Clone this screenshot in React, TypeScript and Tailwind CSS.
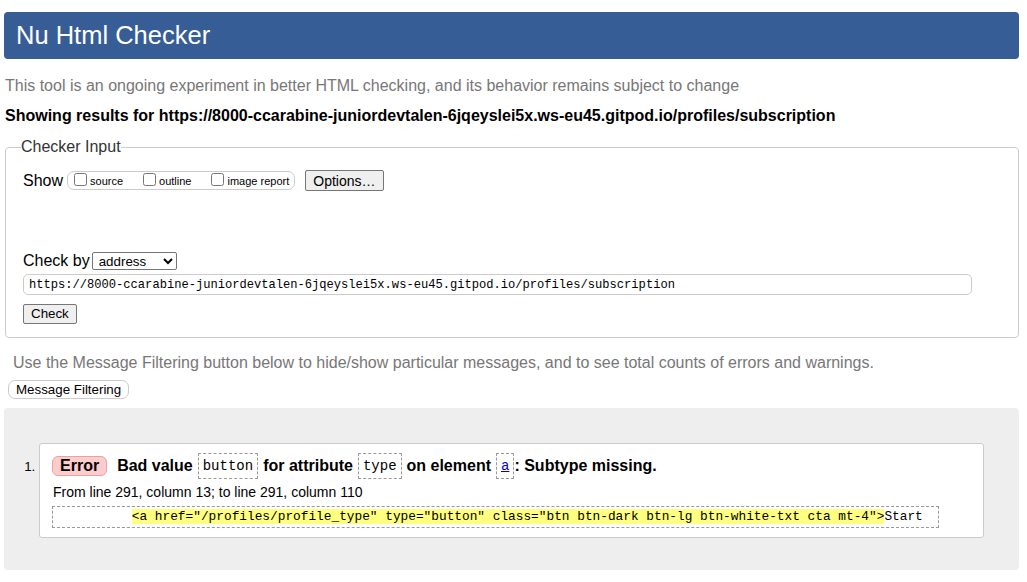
import React from 'react';

const url = 'https://8000-ccarabine-juniordevtalen-6jqeyslei5x.ws-eu45.gitpod.io/profiles/subscription';

const Code = ({ children, link }: { children: React.ReactNode; link?: boolean }) => (
  <code
    className={`mx-[5px] inline-block border border-dashed border-[#999] px-[4px] leading-[24px] font-['Liberation_Mono',monospace] text-[14px] font-normal ${
      link ? 'text-[#00e] underline' : 'text-black'
    }`}
  >
    {children}
  </code>
);

const NativeButton = ({ children, className = '' }: { children: React.ReactNode; className?: string }) => (
  <button
    className={`rounded-[2px] border border-[#767676] bg-[#efefef] px-[7px] text-[13.33px] leading-[18px] text-black ${className}`}
  >
    {children}
  </button>
);

export default function App() {
  return (
    <div className="min-h-[582px] bg-white pl-1 pr-2 pt-3 font-['Liberation_Sans',Arial,sans-serif] text-black">
      {/* header */}
      <h1 className="flex h-[47px] items-center rounded-[4px] bg-[#365d95] pl-3 text-[25.5px] font-normal text-white">
        Nu Html Checker
      </h1>

      <p className="mt-[18px] pl-px text-[16px] leading-[18px] text-[#777]">
        This tool is an ongoing experiment in better HTML checking, and its behavior remains subject to change
      </p>
      <p className="mt-[12px] pl-px text-[16px] font-bold leading-[18px]">Showing results for {url}</p>

      {/* checker input */}
      <fieldset className="mt-[13px] ml-px rounded-[4px] border border-[#ccc] pb-[13px] pl-[17px] pr-[46px]">
        <legend className="-ml-[2px] text-[16px] leading-[18px] text-[#333]">Checker Input</legend>

        <div className="mt-[14px] flex items-center">
          <span className="text-[16px] leading-[18px]">Show</span>
          <div className="ml-[4px] flex h-[19px] items-center rounded-[7px] border border-[#ccc] pl-[6px] pr-[5px] text-[11px]">
            <label className="flex items-end">
              <input type="checkbox" className="mb-[2px] h-[13px] w-[13px]" />
              <span className="ml-[3px] leading-[14px]">source</span>
            </label>
            <label className="ml-[20px] flex items-end">
              <input type="checkbox" className="mb-[2px] h-[13px] w-[13px]" />
              <span className="ml-[3px] leading-[14px]">outline</span>
            </label>
            <label className="ml-[20px] flex items-end">
              <input type="checkbox" className="mb-[2px] h-[13px] w-[13px]" />
              <span className="ml-[3px] leading-[14px]">image report</span>
            </label>
          </div>
          <NativeButton className="ml-[10px] h-[21px] text-[14px]">Options…</NativeButton>
        </div>

        <div className="mt-[61px] flex items-center">
          <span className="text-[16px] leading-[18px]">Check by</span>
          <select className="ml-[2px] h-[18px] w-[85px] rounded-[2px] border border-[#767676] pl-[2px] text-[13.33px] leading-[16px]">
            <option>address</option>
          </select>
        </div>

        <input
          readOnly
          value={url}
          className="mt-[4px] block h-[21px] w-full rounded-[5px] border border-[#ccc] px-[5px] font-['Liberation_Mono',monospace] text-[12.1px] text-black"
        />

        <NativeButton className="mt-[9px] block h-[20px]">Check</NativeButton>
      </fieldset>

      <p className="mt-[16px] pl-[9px] text-[16px] leading-[18px] text-[#777]">
        Use the Message Filtering button below to hide/show particular messages, and to see total counts of errors and warnings.
      </p>
      <button className="mt-[8px] ml-[4px] h-[19px] rounded-[7px] border border-[#ccc] bg-white px-[7px] text-[13.33px] leading-[16px]">
        Message Filtering
      </button>

      {/* results */}
      <div className="mt-[7px] h-[162px] rounded-[4px] bg-[#eee] pl-[35px] pr-[35px] pt-[35px]">
        <ol className="list-decimal text-[13.33px]">
          <li className="rounded-[3px] border border-[#ccc] bg-white pb-[9px] pl-[12px] pt-[9px] pr-[44px] marker:text-black">
            <p className="flex items-center text-[16px] font-bold leading-[24px]">
              <strong className="rounded-[6px] border border-[#e6a3a3] bg-[#fcc] px-[7px] leading-[18px]">Error</strong>
              <span className="ml-[10px]">Bad value</span>
              <Code>button</Code>
              <span>for attribute</span>
              <Code>type</Code>
              <span>on element</span>
              <Code link>a</Code>
              <span className="-ml-[5px]">: Subtype missing.</span>
            </p>
            <p className="mt-[5px] pl-px text-[14px] leading-[16px]">From line 291, column 13; to line 291, column 110</p>
            <p className="mt-[6px] border border-dashed border-[#999] py-[2px] pl-[2px] font-['Liberation_Mono',monospace] text-[12.8px] leading-[16px] whitespace-pre">
              {'          '}
              <mark className="bg-[#ffff80] text-black">
                {'<a href="/profiles/profile_type" type="button" class="btn btn-dark btn-lg btn-white-txt cta mt-4">'}
              </mark>
              Start
            </p>
          </li>
        </ol>
      </div>
    </div>
  );
}
